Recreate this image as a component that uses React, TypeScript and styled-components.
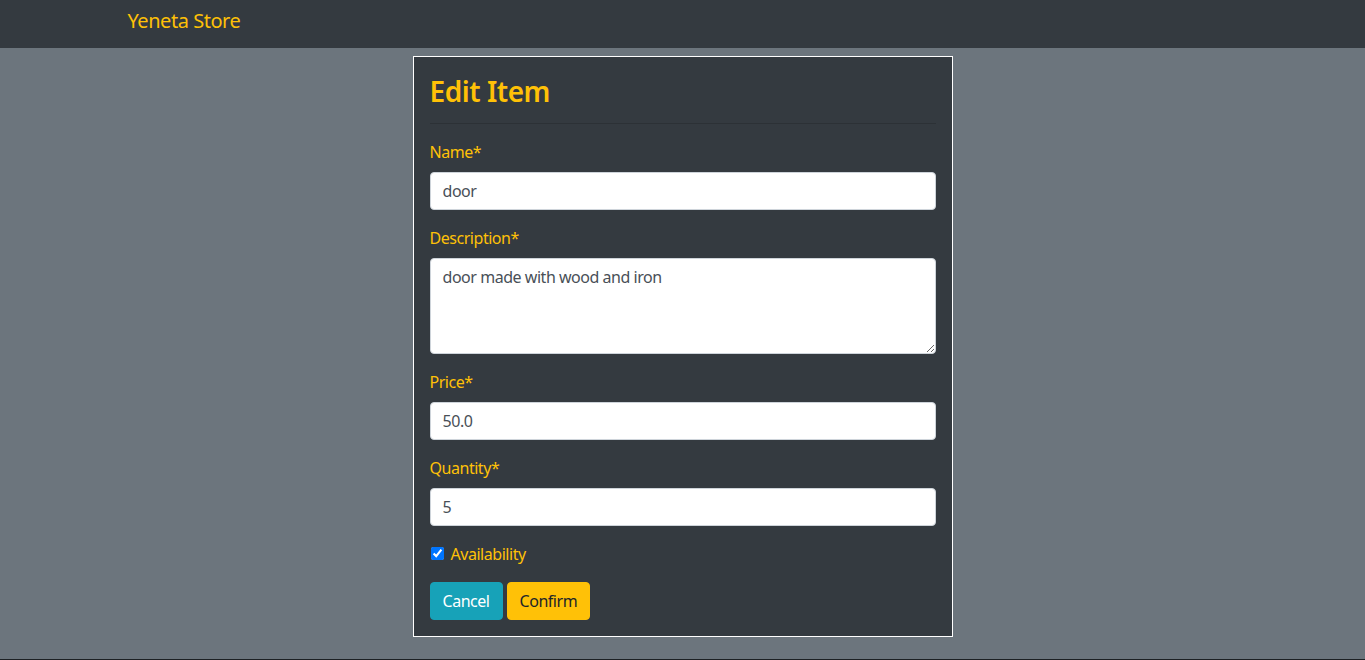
import React from "react";
import styled, { createGlobalStyle } from "styled-components";

const GlobalStyle = createGlobalStyle`
  html, body { margin: 0; padding: 0; }
  body {
    background: #1d2124;
    font-family: "Noto Sans", "Open Sans", Arial, sans-serif;
    font-size: 16px;
    line-height: 1.5;
    letter-spacing: -0.029em;
    color: #212529;
  }
  * { box-sizing: border-box; }
`;

const Page = styled.div`
  min-height: 659px;
  background: #6c757d;
`;

const Navbar = styled.nav`
  height: 48px;
  background: #343a40;
  display: flex;
  align-items: flex-start;
  padding-top: 6px;
`;

const NavContainer = styled.div`
  width: 1140px;
  margin: 0 auto;
  padding: 0 15px;
`;

const Brand = styled.a`
  color: #ffc107;
  font-size: 20px;
  line-height: 30px;
  text-decoration: none;
`;

const Main = styled.main`
  display: flex;
  justify-content: center;
  padding-top: 8px;
`;

const Card = styled.form`
  width: 540px;
  background: #343a40;
  border: 1px solid #ffffff;
  padding: 16px;
  color: #ffc107;
`;

const Title = styled.h3`
  margin: 0;
  font-size: 28px;
  font-weight: 600;
  line-height: 1.2;
  color: #ffc107;
  padding-top: 1.5px;
  height: 33.6px;
`;

const Divider = styled.hr`
  margin: 16px 0;
  border: 0;
  border-top: 1px solid rgba(0, 0, 0, 0.15);
`;

const Group = styled.div`
  margin-bottom: 16px;
`;

const Label = styled.label`
  display: block;
  margin-bottom: 8px;
  line-height: 24px;
`;

const Input = styled.input`
  display: block;
  width: 100%;
  height: 38px;
  padding: 6px 12px;
  font-family: inherit;
  font-size: 16px;
  line-height: 24px;
  letter-spacing: inherit;
  color: #495057;
  background: #fff;
  border: 1px solid #ced4da;
  border-radius: 4px;
  outline: none;
`;

const TextArea = styled.textarea`
  display: block;
  width: 100%;
  height: 96px;
  padding: 6px 12px;
  font-family: inherit;
  font-size: 16px;
  line-height: 24px;
  letter-spacing: inherit;
  color: #495057;
  background: #fff;
  border: 1px solid #ced4da;
  border-radius: 4px;
  outline: none;
  resize: vertical;
`;

const CheckRow = styled.div`
  display: flex;
  align-items: center;
  height: 24px;
  margin-bottom: 16px;
`;

const Check = styled.input`
  width: 13px;
  height: 13px;
  margin: 0 7px 0 1px;
`;

const CheckLabel = styled.label`
  line-height: 24px;
`;

const Buttons = styled.div`
  display: flex;
  gap: 4px;
`;

const Button = styled.button<{ $variant: "info" | "warning" }>`
  height: 38px;
  padding: 6px 12px;
  font-family: inherit;
  font-size: 16px;
  line-height: 24px;
  letter-spacing: inherit;
  border-radius: 4px;
  border: 1px solid ${(p) => (p.$variant === "info" ? "#17a2b8" : "#ffc107")};
  background: ${(p) => (p.$variant === "info" ? "#17a2b8" : "#ffc107")};
  color: ${(p) => (p.$variant === "info" ? "#ffffff" : "#212529")};
  cursor: pointer;
`;

export default function App() {
  return (
    <>
      <GlobalStyle />
      <Page>
        <Navbar>
          <NavContainer>
            <Brand href="#">Yeneta Store</Brand>
          </NavContainer>
        </Navbar>
        <Main>
          <Card onSubmit={(e) => e.preventDefault()}>
            <Title>Edit Item</Title>
            <Divider />
            <Group>
              <Label htmlFor="name">Name*</Label>
              <Input id="name" type="text" defaultValue="door" />
            </Group>
            <Group>
              <Label htmlFor="desc">Description*</Label>
              <TextArea id="desc" defaultValue="door made with wood and iron" />
            </Group>
            <Group>
              <Label htmlFor="price">Price*</Label>
              <Input id="price" type="text" defaultValue="50.0" />
            </Group>
            <Group>
              <Label htmlFor="qty">Quantity*</Label>
              <Input id="qty" type="text" defaultValue="5" />
            </Group>
            <CheckRow>
              <Check id="avail" type="checkbox" defaultChecked />
              <CheckLabel htmlFor="avail">Availability</CheckLabel>
            </CheckRow>
            <Buttons>
              <Button type="button" $variant="info">Cancel</Button>
              <Button type="submit" $variant="warning">Confirm</Button>
            </Buttons>
          </Card>
        </Main>
      </Page>
    </>
  );
}
